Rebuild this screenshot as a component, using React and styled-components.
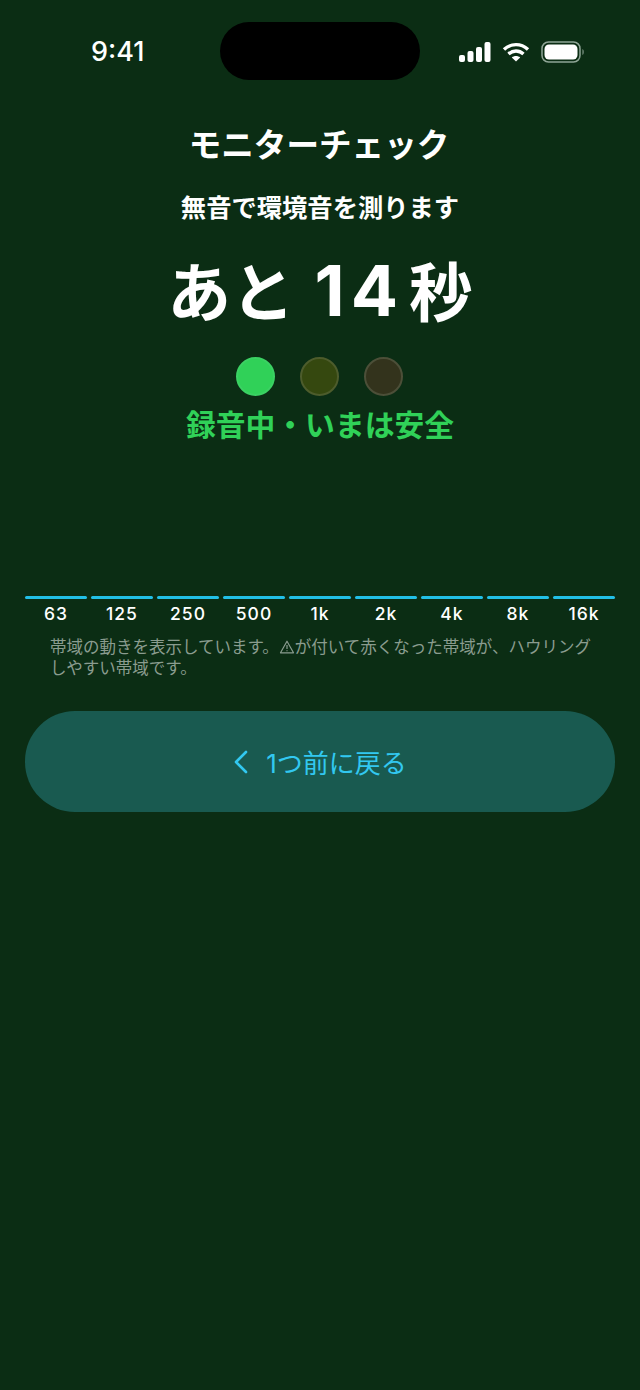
import React from "react";
import styled, { createGlobalStyle } from "styled-components";

const bands = ["63", "125", "250", "500", "1k", "2k", "4k", "8k", "16k"];

const GlobalStyle = createGlobalStyle`
  html, body {
    margin: 0;
    padding: 0;
    background: #0b2d14;
  }
  body {
    font-family: "Inter", "Noto Sans CJK JP", sans-serif;
  }
`;

const Page = styled.div`
  width: 640px;
  height: 1390px;
  background: #0b2d14;
  overflow: hidden;
`;

const StatusBar = styled.div`
  display: grid;
  grid-template-columns: 220px 200px 220px;
  height: 58px;
  padding-top: 22px;
`;

const Time = styled.div`
  padding: 13px 0 0 91px;
  color: #fff;
  font-size: 27px;
  font-weight: 500;
  line-height: 34px;
`;

const Island = styled.div`
  height: 58px;
  background: #000;
  border-radius: 29px;
`;

const StatusIcons = styled.div`
  display: flex;
  align-items: center;
  gap: 11px;
  padding: 1px 0 0 39px;
`;

const Content = styled.main`
  display: flex;
  flex-direction: column;
  align-items: center;
  padding-top: 41px;
`;

const Title = styled.h1`
  margin: 0 2px 0 0;
  color: #fff;
  font-size: 32.6px;
  font-weight: 700;
  line-height: 48px;
`;

const Subtitle = styled.p`
  margin: 21px 0 0;
  color: #fff;
  font-size: 25.3px;
  font-weight: 600;
  line-height: 36px;
`;

const Countdown = styled.div`
  margin-top: 22px;
  color: #fff;
  font-size: 63.5px;
  font-weight: 700;
  line-height: 86px;
`;

const Digits = styled.span`
  margin: 0 5px 0 20px;
  font-size: 70px;
  letter-spacing: 6px;
`;

const Lights = styled.div`
  display: flex;
  gap: 25px;
  margin-top: 21px;
  padding-right: 1px;
`;

const Light = styled.span`
  box-sizing: border-box;
  width: 39px;
  height: 39px;
  border-radius: 50%;
  background: ${(p) => p.$fill};
  border: 2px solid ${(p) => p.$edge};
`;

const Safe = styled.div`
  margin-top: 7px;
  color: #30d158;
  font-size: 29.8px;
  font-weight: 700;
  line-height: 44px;
`;

const Bands = styled.div`
  display: grid;
  grid-template-columns: repeat(9, 1fr);
  column-gap: 4px;
  align-self: stretch;
  margin: 149px 25px 0;
`;

const Band = styled.div`
  display: flex;
  flex-direction: column;
  align-items: center;
`;

const BandBar = styled.div`
  align-self: stretch;
  height: 3px;
  border-radius: 2px;
  background: #22bfe6;
`;

const BandLabel = styled.span`
  margin-top: 2px;
  color: #fff;
  font-size: 17.5px;
  font-weight: 500;
  letter-spacing: 1px;
  line-height: 26px;
`;

const Note = styled.p`
  align-self: stretch;
  margin: 10px 45px 0 50px;
  color: #8a9c8f;
  font-size: 16.5px;
  line-height: 21px;
`;

const BackButton = styled.button`
  display: flex;
  align-items: center;
  justify-content: center;
  gap: 17px;
  align-self: stretch;
  height: 101px;
  margin: 32px 25px 0;
  padding: 0;
  border: 0;
  border-radius: 50px;
  background: #195a50;
  color: #32c8f0;
  font-family: inherit;
  font-size: 26px;
  font-weight: 400;
`;

function Signal() {
  return (
    <svg width="32" height="20" viewBox="0 0 32 20" fill="#fff">
      <rect x="0" y="13" width="6" height="7" rx="2" />
      <rect x="8.5" y="9" width="6" height="11" rx="2" />
      <rect x="17" y="5" width="6" height="15" rx="2" />
      <rect x="25.5" y="0" width="6" height="20" rx="2" />
    </svg>
  );
}

function Wifi() {
  return (
    <svg width="28" height="20" viewBox="0 0 28 20" fill="none" stroke="#fff" strokeWidth="3.4">
      <path d="M2 7.5 C9 1 19 1 26 7.5" />
      <path d="M6.5 12 C11 8 17 8 21.5 12" />
      <path d="M14 19.5 L9.8 15.6 C12 13.6 16 13.6 18.2 15.6 Z" fill="#fff" stroke="none" />
    </svg>
  );
}

function Battery() {
  return (
    <svg width="44" height="22" viewBox="0 0 44 22" fill="none">
      <rect x="1" y="1" width="38" height="20" rx="6.5" stroke="#8fa596" strokeWidth="1.5" />
      <rect x="3.5" y="3.5" width="33" height="15" rx="4.5" fill="#fff" />
      <path d="M41.5 8 C43 8.6 43 13.4 41.5 14 Z" fill="#8fa596" />
    </svg>
  );
}

function WarnIcon() {
  return (
    <svg width="16" height="14" viewBox="0 0 15 14" fill="none" stroke="#8a9c8f" strokeWidth="1.2" style={{ verticalAlign: "-1px" }}>
      <path d="M7.5 1.2 L14 12.8 H1 Z" strokeLinejoin="round" />
      <path d="M7.5 5 V9" />
      <path d="M7.5 10.2 V11.2" />
    </svg>
  );
}

function Chevron() {
  return (
    <svg width="16" height="24" viewBox="0 0 16 24" fill="none" stroke="#32c8f0" strokeWidth="2.6" strokeLinecap="round" strokeLinejoin="round">
      <path d="M13 2 L3 12 L13 22" />
    </svg>
  );
}

export default function App() {
  return (
    <Page>
      <GlobalStyle />
      <StatusBar>
        <Time>9:41</Time>
        <Island />
        <StatusIcons>
          <Signal />
          <Wifi />
          <Battery />
        </StatusIcons>
      </StatusBar>
      <Content>
        <Title>モニターチェック</Title>
        <Subtitle>無音で環境音を測ります</Subtitle>
        <Countdown>
          あと<Digits>14</Digits>秒
        </Countdown>
        <Lights>
          <Light $fill="#30d158" $edge="#3bd163" />
          <Light $fill="#35480f" $edge="#4d5c2c" />
          <Light $fill="#33331c" $edge="#4c4f38" />
        </Lights>
        <Safe>録音中・いまは安全</Safe>
        <Bands>
          {bands.map((b) => (
            <Band key={b}>
              <BandBar />
              <BandLabel>{b}</BandLabel>
            </Band>
          ))}
        </Bands>
        <Note>
          帯域の動きを表示しています。<WarnIcon />が付いて赤くなった帯域が、ハウリングしやすい帯域です。
        </Note>
        <BackButton>
          <Chevron />
          1つ前に戻る
        </BackButton>
      </Content>
    </Page>
  );
}
